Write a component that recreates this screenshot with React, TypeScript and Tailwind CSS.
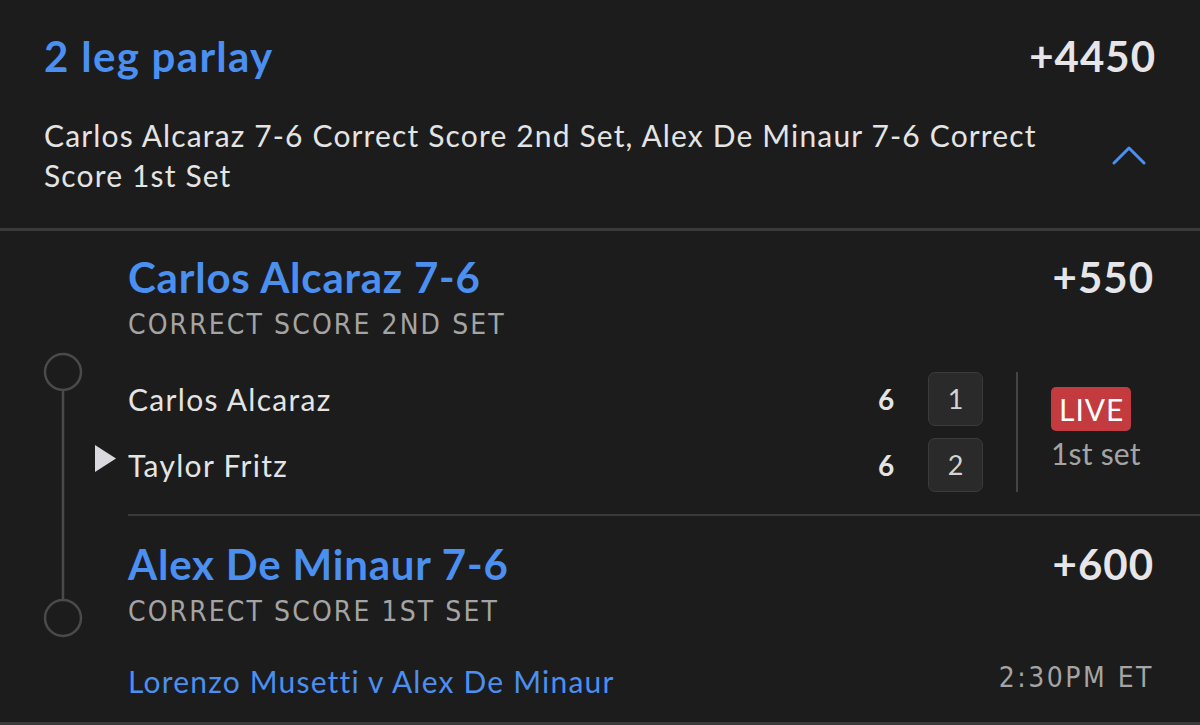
const sans = "font-['Lato','Noto_Sans',sans-serif]";
const narrow =
  "font-['Liberation_Sans_Narrow','DejaVu_Sans_Condensed','Roboto',sans-serif]";

const PlayerRow = ({
  name,
  games,
  points,
  serving,
}: {
  name: string;
  games: number;
  points: number;
  serving?: boolean;
}) => (
  <div className="relative flex h-[54px] items-center">
    {serving && (
      <svg
        className="absolute left-[-33px] top-[7px]"
        width="21"
        height="27"
        viewBox="0 0 21 27"
      >
        <polygon points="0,0 21,13.5 0,27" fill="#d9d9de" />
      </svg>
    )}
    <span className="flex-1 text-[30px] leading-[36px] tracking-[1.3px] text-[#e4e4e4]">
      {name}
    </span>
    <span className="w-[20px] text-[28px] font-bold text-[#e4e4e4]">{games}</span>
    <span className="ml-[30px] flex h-[54px] w-[55px] items-center justify-center rounded-[7px] border-[1.5px] border-[#3b3b3d] bg-[#2a2a2b] text-[27px] text-[#d4d4d4]">
      {points}
    </span>
  </div>
);

const LegHeader = ({
  title,
  odds,
  market,
}: {
  title: string;
  odds: string;
  market: string;
}) => (
  <div>
    <div className="flex items-center justify-between">
      <span className="text-[42px] font-bold leading-[48px] tracking-[0.8px] text-[#4b8ff0]">
        {title}
      </span>
      <span className="text-[42px] font-bold leading-[48px] tracking-[1px] text-[#e5e5ea]">
        {odds}
      </span>
    </div>
    <div
      className={`${narrow} mt-[8px] text-[28px] uppercase leading-[32px] tracking-[2.1px] text-[#a4a4a4]`}
    >
      {market}
    </div>
  </div>
);

export default function App() {
  return (
    <div
      className={`${sans} h-[725px] w-[1200px] overflow-hidden border-b-[3px] border-[#3a3a3a] bg-[#1c1c1c]`}
    >
      {/* parlay header */}
      <div className="border-b-[3px] border-[#3a3a3a] px-[44px] pb-[33px] pt-[32px]">
        <div className="flex items-center justify-between">
          <span className="text-[42px] font-bold leading-[48px] tracking-[1.3px] text-[#4b8ff0]">
            2 leg parlay
          </span>
          <span className="text-[42px] font-bold leading-[48px] tracking-[1px] text-[#e5e5ea]">
            +4450
          </span>
        </div>
        <div className="mt-[35px] flex items-center">
          <p className="w-[1000px] text-[30px] leading-[40px] tracking-[1.15px] text-[#e4e4e4]">
            Carlos Alcaraz 7-6 Correct Score 2nd Set, Alex De Minaur 7-6 Correct Score 1st
            Set
          </p>
          <div className="flex flex-1 justify-end pr-[10px]">
            <svg width="34" height="19" viewBox="0 0 34 19">
              <polyline
                points="2,17 17,2 32,17"
                fill="none"
                stroke="#4b8ff0"
                strokeWidth="3"
                strokeLinecap="round"
                strokeLinejoin="round"
              />
            </svg>
          </div>
        </div>
      </div>

      {/* legs */}
      <div className="flex">
        <div className="w-[128px] shrink-0">
          <svg width="128" height="491" viewBox="0 0 128 491">
            <circle cx="63" cy="141" r="18" fill="none" stroke="#4a4a4a" strokeWidth="2.5" />
            <line x1="63" y1="159" x2="63" y2="369" stroke="#4a4a4a" strokeWidth="2.5" />
            <circle cx="63" cy="387" r="18" fill="none" stroke="#4a4a4a" strokeWidth="2.5" />
          </svg>
        </div>
        <div className="flex-1">
          {/* leg 1 */}
          <div className="border-b-[2px] border-[#3a3a3a] pb-[22px] pr-[46px] pt-[22px]">
            <LegHeader title="Carlos Alcaraz 7-6" odds="+550" market="Correct Score 2nd Set" />
            <div className="mt-[31px] flex items-start">
              <div className="flex flex-1 flex-col gap-[12px]">
                <PlayerRow name="Carlos Alcaraz" games={6} points={1} />
                <PlayerRow name="Taylor Fritz" games={6} points={2} serving />
              </div>
              <div className="mx-[33px] h-[120px] w-[2px] bg-[#444]" />
              <div className="mt-[15px] flex w-[103px] flex-col items-start">
                <span className="rounded-[5px] bg-[#c33a3f] pl-[8px] pr-[7px] text-[30px] leading-[44px] tracking-[1px] text-white">
                  LIVE
                </span>
                <span className="mt-[4px] text-[30px] leading-[36px] tracking-[0.2px] text-[#a4a4a4]">
                  1st set
                </span>
              </div>
            </div>
          </div>

          {/* leg 2 */}
          <div className="pr-[46px] pt-[24px]">
            <LegHeader title="Alex De Minaur 7-6" odds="+600" market="Correct Score 1st Set" />
            <div className="mt-[35px] flex items-start justify-between">
              <span className="text-[30px] leading-[36px] tracking-[1.2px] text-[#4b8ff0]">
                Lorenzo Musetti v Alex De Minaur
              </span>
              <span
                className={`${narrow} -mt-[3px] text-[28px] leading-[36px] tracking-[2.5px] text-[#a4a4a4]`}
              >
                2:30PM ET
              </span>
            </div>
          </div>
        </div>
      </div>
    </div>
  );
}
